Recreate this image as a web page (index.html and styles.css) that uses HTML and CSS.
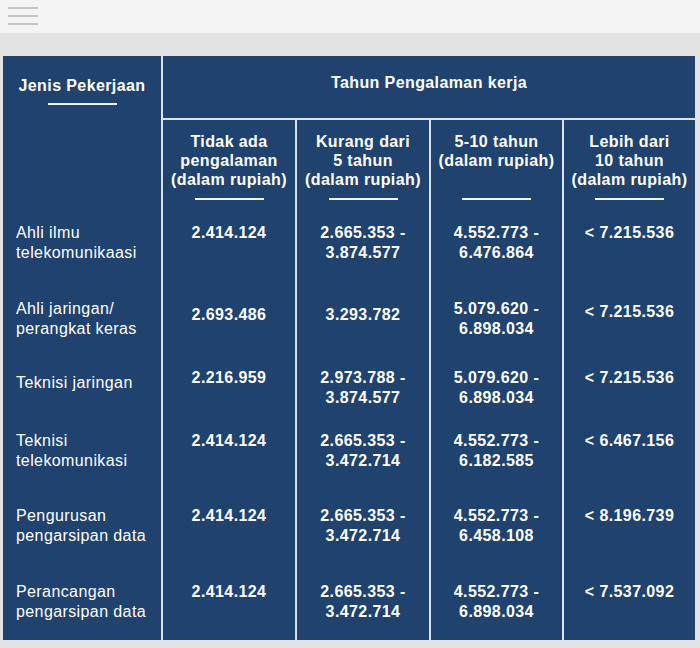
FILE: index.html
```html
<!DOCTYPE html>
<html lang="id">
<head>
<meta charset="utf-8">
<title>Tahun Pengalaman kerja</title>
<link rel="stylesheet" href="styles.css">
</head>
<body>
<header class="topbar">
  <div class="burger"><span></span><span></span><span></span></div>
</header>
<main class="page">
  <div class="grid">
    <div class="cell head-main col1"><div class="htext">Jenis Pekerjaan</div><span class="rule rule-a"></span></div>
    <div class="cell head-main span4"><div class="htext">Tahun Pengalaman kerja</div></div>

    <div class="cell head-sub"><div class="stext">Tidak ada<br>pengalaman<br>(dalam rupiah)</div><span class="rule"></span></div>
    <div class="cell head-sub"><div class="stext">Kurang dari<br>5 tahun<br>(dalam rupiah)</div><span class="rule"></span></div>
    <div class="cell head-sub"><div class="stext">5-10 tahun<br>(dalam rupiah)</div><span class="rule"></span></div>
    <div class="cell head-sub"><div class="stext">Lebih dari<br>10 tahun<br>(dalam rupiah)</div><span class="rule"></span></div>

    <div class="cell label">Ahli ilmu<br>telekomunikaasi</div>
    <div class="cell val">2.414.124</div>
    <div class="cell val">2.665.353 -<br>3.874.577</div>
    <div class="cell val">4.552.773 -<br>6.476.864</div>
    <div class="cell val">&lt; 7.215.536</div>

    <div class="cell label">Ahli jaringan/<br>perangkat keras</div>
    <div class="cell val p19">2.693.486</div>
    <div class="cell val p19">3.293.782</div>
    <div class="cell val">5.079.620 -<br>6.898.034</div>
    <div class="cell val p16">&lt; 7.215.536</div>

    <div class="cell label p18">Teknisi jaringan</div>
    <div class="cell val">2.216.959</div>
    <div class="cell val">2.973.788 -<br>3.874.577</div>
    <div class="cell val">5.079.620 -<br>6.898.034</div>
    <div class="cell val">&lt; 7.215.536</div>

    <div class="cell label">Teknisi<br>telekomunikasi</div>
    <div class="cell val">2.414.124</div>
    <div class="cell val">2.665.353 -<br>3.472.714</div>
    <div class="cell val">4.552.773 -<br>6.182.585</div>
    <div class="cell val">&lt; 6.467.156</div>

    <div class="cell label">Pengurusan<br>pengarsipan data</div>
    <div class="cell val">2.414.124</div>
    <div class="cell val">2.665.353 -<br>3.472.714</div>
    <div class="cell val">4.552.773 -<br>6.458.108</div>
    <div class="cell val">&lt; 8.196.739</div>

    <div class="cell label">Perancangan<br>pengarsipan data</div>
    <div class="cell val">2.414.124</div>
    <div class="cell val">2.665.353 -<br>3.472.714</div>
    <div class="cell val">4.552.773 -<br>6.898.034</div>
    <div class="cell val">&lt; 7.537.092</div>
  </div>
</main>
</body>
</html>
```

FILE: styles.css
```css
* { box-sizing: border-box; }
html, body { margin: 0; padding: 0; }
body {
  background: #e3e3e3;
  font-family: "Liberation Sans", Arial, sans-serif;
  color: #ffffff;
  width: 700px;
  height: 648px;
  overflow: hidden;
}
.topbar {
  height: 33px;
  background: #f4f4f4;
  padding: 7px 0 0 8px;
}
.burger {
  width: 30px;
  display: flex;
  flex-direction: column;
  gap: 6px;
}
.burger span {
  display: block;
  height: 2px;
  background: #c4c4c4;
}
.page {
  background: #e3e3e3;
  padding: 23px 5px 8px 3px;
}
.grid {
  display: grid;
  grid-template-columns: 158px 132px 132px 131px 131px;
  grid-template-rows: 64px 90px 76px 69px 63px 75px 76px 71px;
  column-gap: 2px;
  background: #dce5ee;
}
.cell {
  background: #1f426f;
  font-size: 16px;
  line-height: 20px;
  letter-spacing: 0.4px;
  padding-top: 13px;
}
.col1 {
  grid-row: 1 / span 2;
}
.span4 {
  grid-column: 2 / span 4;
  margin-bottom: 2px;
  padding-top: 17px;
  text-align: center;
}
.head-main {
  font-weight: bold;
}
.col1.head-main {
  padding-top: 20px;
  display: flex;
  flex-direction: column;
  align-items: center;
}
.htext { white-space: nowrap; }
.rule {
  display: block;
  width: 69px;
  height: 2px;
  background: #f2f5f8;
}
.rule-a { margin-top: 7px; }
.head-sub {
  font-weight: bold;
  line-height: 19px;
  padding-top: 12px;
  display: flex;
  flex-direction: column;
  align-items: center;
  text-align: center;
}
.stext {
  height: 56px;
  white-space: nowrap;
}
.head-sub .rule { margin-top: 10px; }
.label {
  padding-left: 13px;
  font-weight: normal;
}
.val {
  font-weight: bold;
  text-align: center;
}
.p19 { padding-top: 19px; }
.p18 { padding-top: 18px; }
.p16 { padding-top: 16px; }
```
